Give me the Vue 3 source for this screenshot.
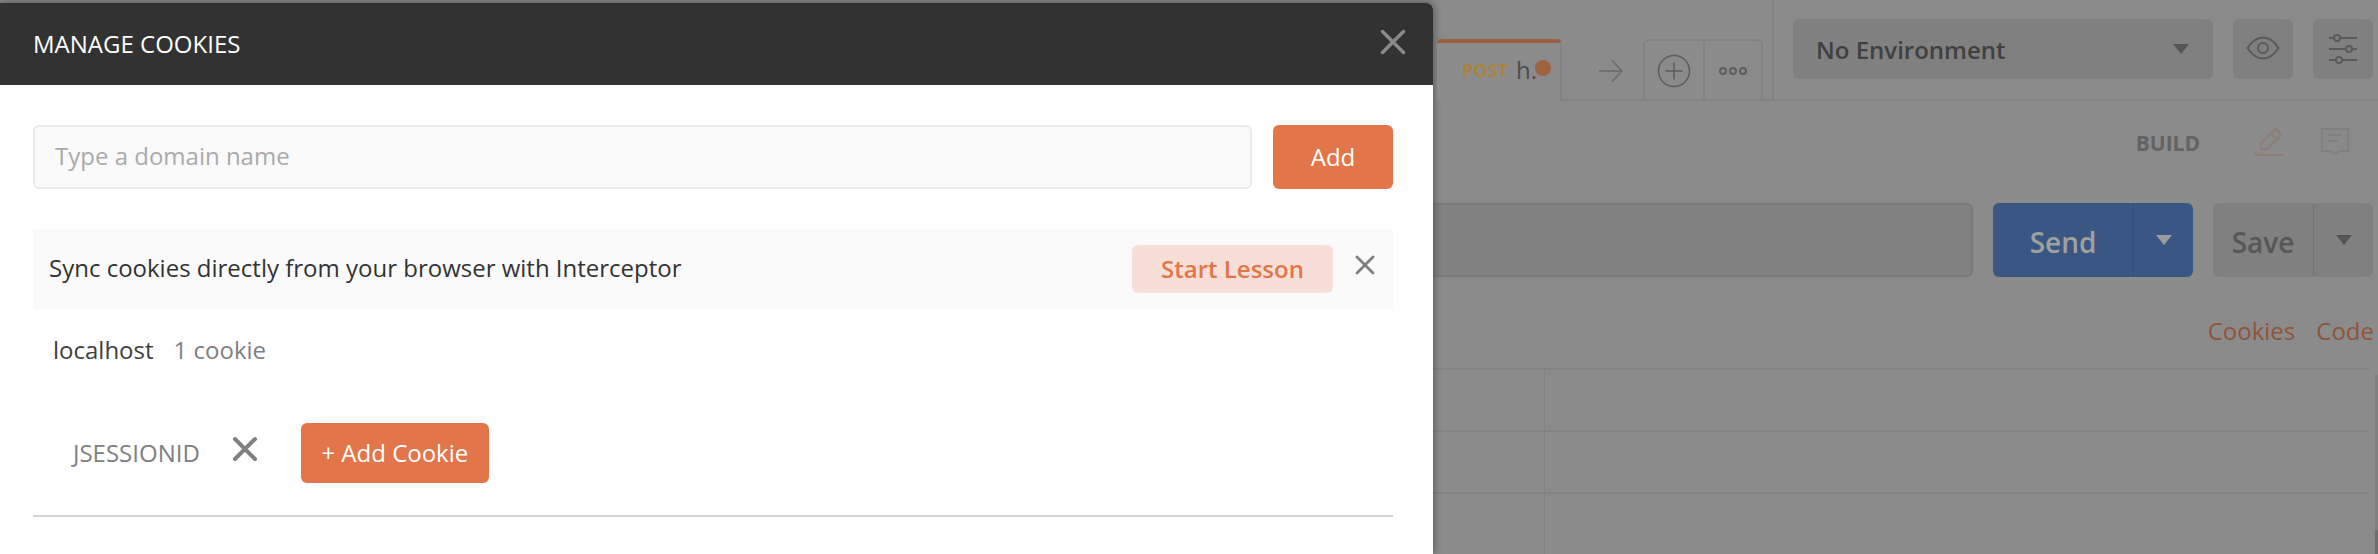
<script setup>
const tableRows = [0, 1, 2];
</script>

<template>
	<div class="page">
		<div class="app">
			<div class="tabs-row">
				<div class="tab">
					<span class="tab-method">POST</span>
					<span class="tab-name">h.</span>
					<span class="tab-dot" />
				</div>
				<svg class="tab-arrow" width="24" height="24" viewBox="0 0 24 24">
					<path d="M0 12H23M13 1.500l10 10.500-10 10.500" fill="none" stroke="#6a6a6a" stroke-width="1.500" />
				</svg>
				<div class="tab-actions">
					<div class="tab-action">
						<svg width="34" height="34" viewBox="0 0 34 34">
							<circle cx="17" cy="17" r="15.500" fill="none" stroke="#5c5c5c" stroke-width="1.500" />
							<path d="M17 8.500V25.500M8.500 17H25.500" stroke="#5c5c5c" stroke-width="1.500" />
						</svg>
					</div>
					<div class="tab-action">
						<svg width="30" height="10" viewBox="0 0 30 10">
							<circle cx="5" cy="5" r="3" fill="none" stroke="#5c5c5c" stroke-width="2" />
							<circle cx="15" cy="5" r="3" fill="none" stroke="#5c5c5c" stroke-width="2" />
							<circle cx="25" cy="5" r="3" fill="none" stroke="#5c5c5c" stroke-width="2" />
						</svg>
					</div>
				</div>
				<div class="env-area">
					<div class="env-select">
						<span>No Environment</span>
						<i class="caret dark" />
					</div>
					<div class="icon-btn">
						<svg class="eye-icon" width="34" height="24" viewBox="0 0 34 24">
							<path d="M1.500 12C6 5 11 1.500 17 1.500S28 5 32.500 12C28 19 23 22.500 17 22.500S6 19 1.500 12z" fill="none" stroke="#5a5a5a" stroke-width="2" />
							<circle cx="17" cy="12" r="5" fill="none" stroke="#5a5a5a" stroke-width="2" />
						</svg>
					</div>
					<div class="icon-btn">
						<svg width="28" height="30" viewBox="0 0 28 30">
							<path d="M0 4H28M0 15H28M0 26H28" stroke="#5a5a5a" stroke-width="2" />
							<circle cx="8" cy="4" r="3" fill="#808080" stroke="#5a5a5a" stroke-width="2" />
							<circle cx="20" cy="15" r="3" fill="#808080" stroke="#5a5a5a" stroke-width="2" />
							<circle cx="10" cy="26" r="3" fill="#808080" stroke="#5a5a5a" stroke-width="2" />
						</svg>
					</div>
				</div>
			</div>

			<div class="build-row">
				<span class="build-label">BUILD</span>
				<div class="build-group">
					<div class="build-btn active">
						<svg width="28" height="28" viewBox="0 0 28 28">
							<path d="M1 23v4H28M6 21V15.500L18.500 2.500c1.300-1.300 2.700-1.300 4 0l2 2c1.300 1.300 1.300 2.700 0 4L12 21zM16 5.500l6 6" fill="none" stroke="#8e7d75" stroke-width="2" />
						</svg>
					</div>
					<div class="build-btn">
						<svg width="28" height="27" viewBox="0 0 28 27">
							<path d="M1 1H27V23H18L14 26.500 10 23H1zM7 7H21M7 13H17" fill="none" stroke="#808080" stroke-width="2" />
						</svg>
					</div>
				</div>
			</div>

			<div class="url-row">
				<div class="url-input" />
				<div class="split-btn send">
					<span class="split-label">Send</span>
					<span class="split-caret"><i class="caret light" /></span>
				</div>
				<div class="split-btn save">
					<span class="split-label">Save</span>
					<span class="split-caret"><i class="caret dark" /></span>
				</div>
			</div>

			<div class="links-row">
				<span>Cookies</span>
				<span>Code</span>
			</div>

			<div class="table">
				<div v-for="row in tableRows" :key="row" class="table-row">
					<div class="table-key" />
					<div class="table-value" />
				</div>
			</div>
		</div>

		<div class="scrollbar">
			<div class="scrollbar-thumb" />
		</div>

		<div class="modal">
			<div class="modal-header">
				<span class="modal-title">MANAGE COOKIES</span>
				<svg class="modal-close" width="26" height="26" viewBox="0 0 26 26">
					<path d="M2.500 2.500L23.500 23.500M23.500 2.500L2.500 23.500" stroke="#8a8a8a" stroke-width="3.500" stroke-linecap="round" />
				</svg>
			</div>
			<div class="modal-body">
				<div class="domain-row">
					<div class="domain-input">Type a domain name</div>
					<button class="orange-btn add-btn">Add</button>
				</div>
				<div class="lesson-banner">
					<span class="lesson-text">Sync cookies directly from your browser with Interceptor</span>
					<button class="lesson-btn">Start Lesson</button>
					<svg class="lesson-close" width="20" height="20" viewBox="0 0 20 20">
						<path d="M2 2L18 18M18 2L2 18" stroke="#808080" stroke-width="2.800" stroke-linecap="round" />
					</svg>
				</div>
				<div class="domain-line">
					<span class="domain-name">localhost</span>
					<span class="cookie-count">1 cookie</span>
				</div>
				<div class="cookie-row">
					<span class="cookie-name">JSESSIONID</span>
					<svg class="cookie-remove" width="26" height="26" viewBox="0 0 26 26">
						<path d="M3 3L23 23M23 3L3 23" stroke="#808080" stroke-width="4" stroke-linecap="round" />
					</svg>
					<button class="orange-btn add-cookie">+ Add Cookie</button>
				</div>
				<div class="divider" />
			</div>
		</div>
	</div>
</template>

<style>
html,
body {
	margin: 0;
	background: #8b8b8b;
}
</style>

<style scoped>
.page {
	width: 2378px;
	height: 554px;
	position: relative;
	overflow: hidden;
	background: #8b8b8b;
	font-family: "Open Sans", "Noto Sans", sans-serif;
}
.app {
	display: flex;
	flex-direction: column;
	padding-left: 1437px;
	box-sizing: border-box;
	height: 100%;
}
.tabs-row {
	display: flex;
	height: 101px;
	border-bottom: 2px solid #828282;
	box-sizing: border-box;
}
.tab {
	width: 125px;
	margin-top: 39px;
	height: 62px;
	box-sizing: border-box;
	border-top: 4px solid #9a5f42;
	border-right: 2px solid #828282;
	border-radius: 4px 4px 0 0;
	background: #8b8b8b;
	display: flex;
	align-items: center;
	padding: 0 0 5px 25px;
	position: relative;
	z-index: 1;
}
.tab-method {
	color: #a8853f;
	font-size: 18px;
	font-weight: 700;
	margin-right: 8px;
}
.tab-name {
	color: #4d4d4d;
	font-size: 24px;
	line-height: 30px;
}
.tab-dot {
	width: 16px;
	height: 16px;
	border-radius: 50%;
	background: #a0633f;
	margin: -3px 0 0 -2px;
}
.tab-arrow {
	margin: 59px 0 0 37px;
}
.tab-actions {
	display: flex;
	margin: 39px 0 0 20px;
	height: 60px;
	border: 2px solid #828282;
	border-bottom: 0;
	border-radius: 6px 6px 0 0;
	box-sizing: border-box;
}
.tab-action {
	width: 58px;
	display: flex;
	align-items: center;
	justify-content: center;
	padding-top: 2px;
	box-sizing: border-box;
}
.tab-action + .tab-action {
	border-left: 2px solid #828282;
}
.env-area {
	display: flex;
	align-items: flex-start;
	margin-left: 9px;
	padding: 19px 0 0 19px;
	border-left: 2px solid #828282;
	gap: 20px;
}
.env-select {
	width: 420px;
	height: 60px;
	border-radius: 6px;
	background: #808080;
	color: #404040;
	font-size: 24px;
	font-weight: 600;
	display: flex;
	align-items: center;
	justify-content: space-between;
	padding: 0 24px 0 23px;
	box-sizing: border-box;
}
.icon-btn {
	width: 60px;
	height: 60px;
	border-radius: 6px;
	background: #808080;
	display: flex;
	align-items: center;
	justify-content: center;
}
.eye-icon {
	margin-bottom: 2px;
}
.caret {
	display: block;
	width: 0;
	height: 0;
	border-left: 8px solid transparent;
	border-right: 8px solid transparent;
	border-top: 10px solid #555;
}
.caret.light {
	border-top-color: #9c9c9c;
}
.build-row {
	display: flex;
	align-items: center;
	justify-content: flex-end;
	height: 63px;
	margin: 9px 5px 0 0;
}
.build-label {
	color: #636363;
	font-size: 21px;
	font-weight: 700;
	margin-right: 33px;
	padding-top: 3px;
}
.build-group {
	display: flex;
	width: 140px;
	height: 63px;
	padding: 3px 4px;
	box-sizing: border-box;
	border-radius: 6px;
	background: #8a8a8a;
}
.build-btn {
	flex: 1;
	display: flex;
	align-items: center;
	justify-content: center;
	border-radius: 4px;
}
.build-btn.active {
	flex: none;
	width: 63px;
	background: #8b8b8b;
}
.url-row {
	display: flex;
	gap: 20px;
	margin: 30px 5px 0 -40px;
	height: 80px;
}
.url-input {
	flex: 1;
	background: #828282;
	border: 2px solid #7a7a7a;
	border-radius: 6px;
}
.split-btn {
	display: flex;
	border-radius: 6px;
	color: #a0a0a0;
	font-size: 28px;
	font-weight: 600;
}
.send {
	width: 200px;
	background: #3a5682;
}
.save {
	width: 160px;
	background: #808080;
	color: #575757;
}
.split-label {
	flex: 1;
	display: flex;
	align-items: center;
	justify-content: center;
	padding-top: 3px;
}
.split-caret {
	display: flex;
	align-items: center;
	justify-content: center;
	width: 60px;
	border-left: 1px solid #344e77;
	box-sizing: border-box;
}
.save .split-caret {
	border-left-color: #757575;
}
.links-row {
	display: flex;
	justify-content: flex-end;
	gap: 21px;
	margin: 34px 4px 0 0;
	color: #8f5439;
	font-size: 24px;
	line-height: 40px;
}
.table {
	margin: 17px 9px 0 -40px;
	border-top: 2px solid #838383;
}
.table-row {
	display: flex;
	height: 60px;
	border-bottom: 2px solid #838383;
}
.table-row:last-child {
	border-bottom: 0;
}
.table-key {
	width: 147px;
	border-right: 1px solid #828282;
}
.table-value {
	flex: 1;
}
.scrollbar {
	position: absolute;
	top: 375px;
	right: 0;
	bottom: 0;
	width: 3px;
	background: #808080;
	display: flex;
	align-items: flex-end;
}
.scrollbar-thumb {
	width: 100%;
	height: 24px;
	background: #6e6e6e;
}

.modal {
	position: absolute;
	top: 3px;
	left: 0;
	bottom: 0;
	width: 1433px;
	background: #fff;
	border-radius: 0 6px 0 0;
	box-shadow: 0 0 10px rgba(0, 0, 0, 0.45);
	display: flex;
	flex-direction: column;
}
.modal-header {
	height: 82px;
	background: #323232;
	border-radius: 0 6px 0 0;
	display: flex;
	align-items: center;
	justify-content: space-between;
	padding: 0 27px 2px 33px;
	box-sizing: border-box;
	flex-shrink: 0;
}
.modal-title {
	color: #fff;
	font-size: 24px;
}
.modal-close {
	margin-bottom: 2px;
}
.modal-body {
	padding: 40px 40px 0 33px;
}
.domain-row {
	display: flex;
	gap: 21px;
	height: 64px;
}
.domain-input {
	flex: 1;
	background: #fafafa;
	border: 2px solid #eaeaea;
	border-radius: 6px;
	color: #aaa;
	font-size: 24px;
	line-height: 58px;
	padding-left: 20px;
}
.orange-btn {
	border: 0;
	border-radius: 6px;
	background: #e2754a;
	color: #fff;
	font-family: inherit;
	font-size: 24px;
	padding: 0 0 2px;
}
.add-btn {
	width: 120px;
}
.lesson-banner {
	display: flex;
	align-items: center;
	height: 80px;
	margin-top: 40px;
	background: #fafafa;
	padding: 0 18px 0 16px;
}
.lesson-text {
	flex: 1;
	color: #333;
	font-size: 24px;
	padding-bottom: 3px;
}
.lesson-btn {
	width: 201px;
	height: 48px;
	border: 0;
	border-radius: 6px;
	background: #f7dfd7;
	color: #e2754a;
	font-family: inherit;
	font-size: 24px;
	font-weight: 600;
	padding: 0 0 2px;
}
.lesson-close {
	margin: 0 0 8px 22px;
}
.domain-line {
	display: flex;
	gap: 20px;
	height: 80px;
	align-items: center;
	padding-left: 20px;
	font-size: 24px;
}
.domain-name {
	color: #404040;
}
.cookie-count {
	color: #808080;
}
.cookie-row {
	display: flex;
	align-items: center;
	margin-top: 34px;
	padding-left: 40px;
}
.cookie-name {
	color: #808080;
	font-size: 24px;
	padding-bottom: 2px;
}
.cookie-remove {
	margin: 0 0 8px 32px;
}
.add-cookie {
	width: 188px;
	height: 60px;
	margin-left: 43px;
}
.divider {
	height: 2px;
	margin-top: 32px;
	background: #d4d4d4;
}
</style>
